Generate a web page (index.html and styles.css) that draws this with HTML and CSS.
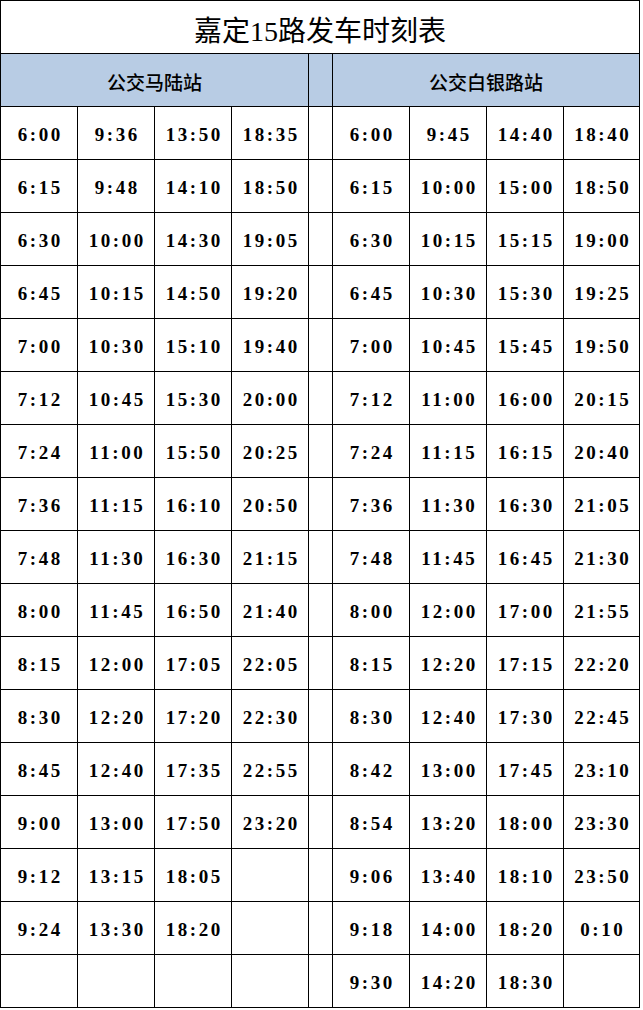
FILE: index.html
```html
<!DOCTYPE html>
<html lang="zh-CN">
<head>
<meta charset="utf-8">
<title>嘉定15路发车时刻表</title>
<link rel="stylesheet" href="styles.css">
</head>
<body>
<div class="sheet">
  <div class="title">嘉定15路发车时刻表</div>
  <div class="head span4">公交马陆站</div>
  <div class="head"></div>
  <div class="head span4">公交白银路站</div>

  <div class="c">6:00</div><div class="c">9:36</div><div class="c">13:50</div><div class="c">18:35</div><div class="gap"></div><div class="c">6:00</div><div class="c">9:45</div><div class="c">14:40</div><div class="c">18:40</div>
  <div class="c">6:15</div><div class="c">9:48</div><div class="c">14:10</div><div class="c">18:50</div><div class="gap"></div><div class="c">6:15</div><div class="c">10:00</div><div class="c">15:00</div><div class="c">18:50</div>
  <div class="c">6:30</div><div class="c">10:00</div><div class="c">14:30</div><div class="c">19:05</div><div class="gap"></div><div class="c">6:30</div><div class="c">10:15</div><div class="c">15:15</div><div class="c">19:00</div>
  <div class="c">6:45</div><div class="c">10:15</div><div class="c">14:50</div><div class="c">19:20</div><div class="gap"></div><div class="c">6:45</div><div class="c">10:30</div><div class="c">15:30</div><div class="c">19:25</div>
  <div class="c">7:00</div><div class="c">10:30</div><div class="c">15:10</div><div class="c">19:40</div><div class="gap"></div><div class="c">7:00</div><div class="c">10:45</div><div class="c">15:45</div><div class="c">19:50</div>
  <div class="c">7:12</div><div class="c">10:45</div><div class="c">15:30</div><div class="c">20:00</div><div class="gap"></div><div class="c">7:12</div><div class="c">11:00</div><div class="c">16:00</div><div class="c">20:15</div>
  <div class="c">7:24</div><div class="c">11:00</div><div class="c">15:50</div><div class="c">20:25</div><div class="gap"></div><div class="c">7:24</div><div class="c">11:15</div><div class="c">16:15</div><div class="c">20:40</div>
  <div class="c">7:36</div><div class="c">11:15</div><div class="c">16:10</div><div class="c">20:50</div><div class="gap"></div><div class="c">7:36</div><div class="c">11:30</div><div class="c">16:30</div><div class="c">21:05</div>
  <div class="c">7:48</div><div class="c">11:30</div><div class="c">16:30</div><div class="c">21:15</div><div class="gap"></div><div class="c">7:48</div><div class="c">11:45</div><div class="c">16:45</div><div class="c">21:30</div>
  <div class="c">8:00</div><div class="c">11:45</div><div class="c">16:50</div><div class="c">21:40</div><div class="gap"></div><div class="c">8:00</div><div class="c">12:00</div><div class="c">17:00</div><div class="c">21:55</div>
  <div class="c">8:15</div><div class="c">12:00</div><div class="c">17:05</div><div class="c">22:05</div><div class="gap"></div><div class="c">8:15</div><div class="c">12:20</div><div class="c">17:15</div><div class="c">22:20</div>
  <div class="c">8:30</div><div class="c">12:20</div><div class="c">17:20</div><div class="c">22:30</div><div class="gap"></div><div class="c">8:30</div><div class="c">12:40</div><div class="c">17:30</div><div class="c">22:45</div>
  <div class="c">8:45</div><div class="c">12:40</div><div class="c">17:35</div><div class="c">22:55</div><div class="gap"></div><div class="c">8:42</div><div class="c">13:00</div><div class="c">17:45</div><div class="c">23:10</div>
  <div class="c">9:00</div><div class="c">13:00</div><div class="c">17:50</div><div class="c">23:20</div><div class="gap"></div><div class="c">8:54</div><div class="c">13:20</div><div class="c">18:00</div><div class="c">23:30</div>
  <div class="c">9:12</div><div class="c">13:15</div><div class="c">18:05</div><div class="c"></div><div class="gap"></div><div class="c">9:06</div><div class="c">13:40</div><div class="c">18:10</div><div class="c">23:50</div>
  <div class="c">9:24</div><div class="c">13:30</div><div class="c">18:20</div><div class="c"></div><div class="gap"></div><div class="c">9:18</div><div class="c">14:00</div><div class="c">18:20</div><div class="c">0:10</div>
  <div class="c"></div><div class="c"></div><div class="c"></div><div class="c"></div><div class="gap"></div><div class="c">9:30</div><div class="c">14:20</div><div class="c">18:30</div><div class="c"></div>
</div>
</body>
</html>
```

FILE: styles.css
```css
html, body {
  margin: 0;
  padding: 0;
  background: #ffffff;
}

.sheet {
  display: grid;
  grid-template-columns: 76px 76px 76px 76px 23px 76px 76px 76px 75px;
  grid-auto-rows: 52px;
  gap: 1px;
  padding: 1px;
  width: 638px;
  background: #000000;
}

.sheet > div {
  background: #ffffff;
  display: flex;
  align-items: center;
  justify-content: center;
  color: #000000;
}

.title {
  grid-column: 1 / -1;
  font-family: "Liberation Serif", "Noto Sans CJK SC", serif;
  font-size: 28px;
  padding-top: 4px;
  box-sizing: border-box;
}

.sheet > .head {
  background: #b8cce4;
  font-family: "Noto Sans CJK SC", sans-serif;
  font-size: 19px;
  font-weight: 500;
  padding-top: 3px;
  box-sizing: border-box;
}

.span4 {
  grid-column: span 4;
}

.c {
  font-family: "Liberation Serif", serif;
  font-weight: bold;
  font-size: 19px;
  letter-spacing: 2.6px;
  padding-left: 2.6px;
  padding-top: 4px;
  box-sizing: border-box;
}
```
